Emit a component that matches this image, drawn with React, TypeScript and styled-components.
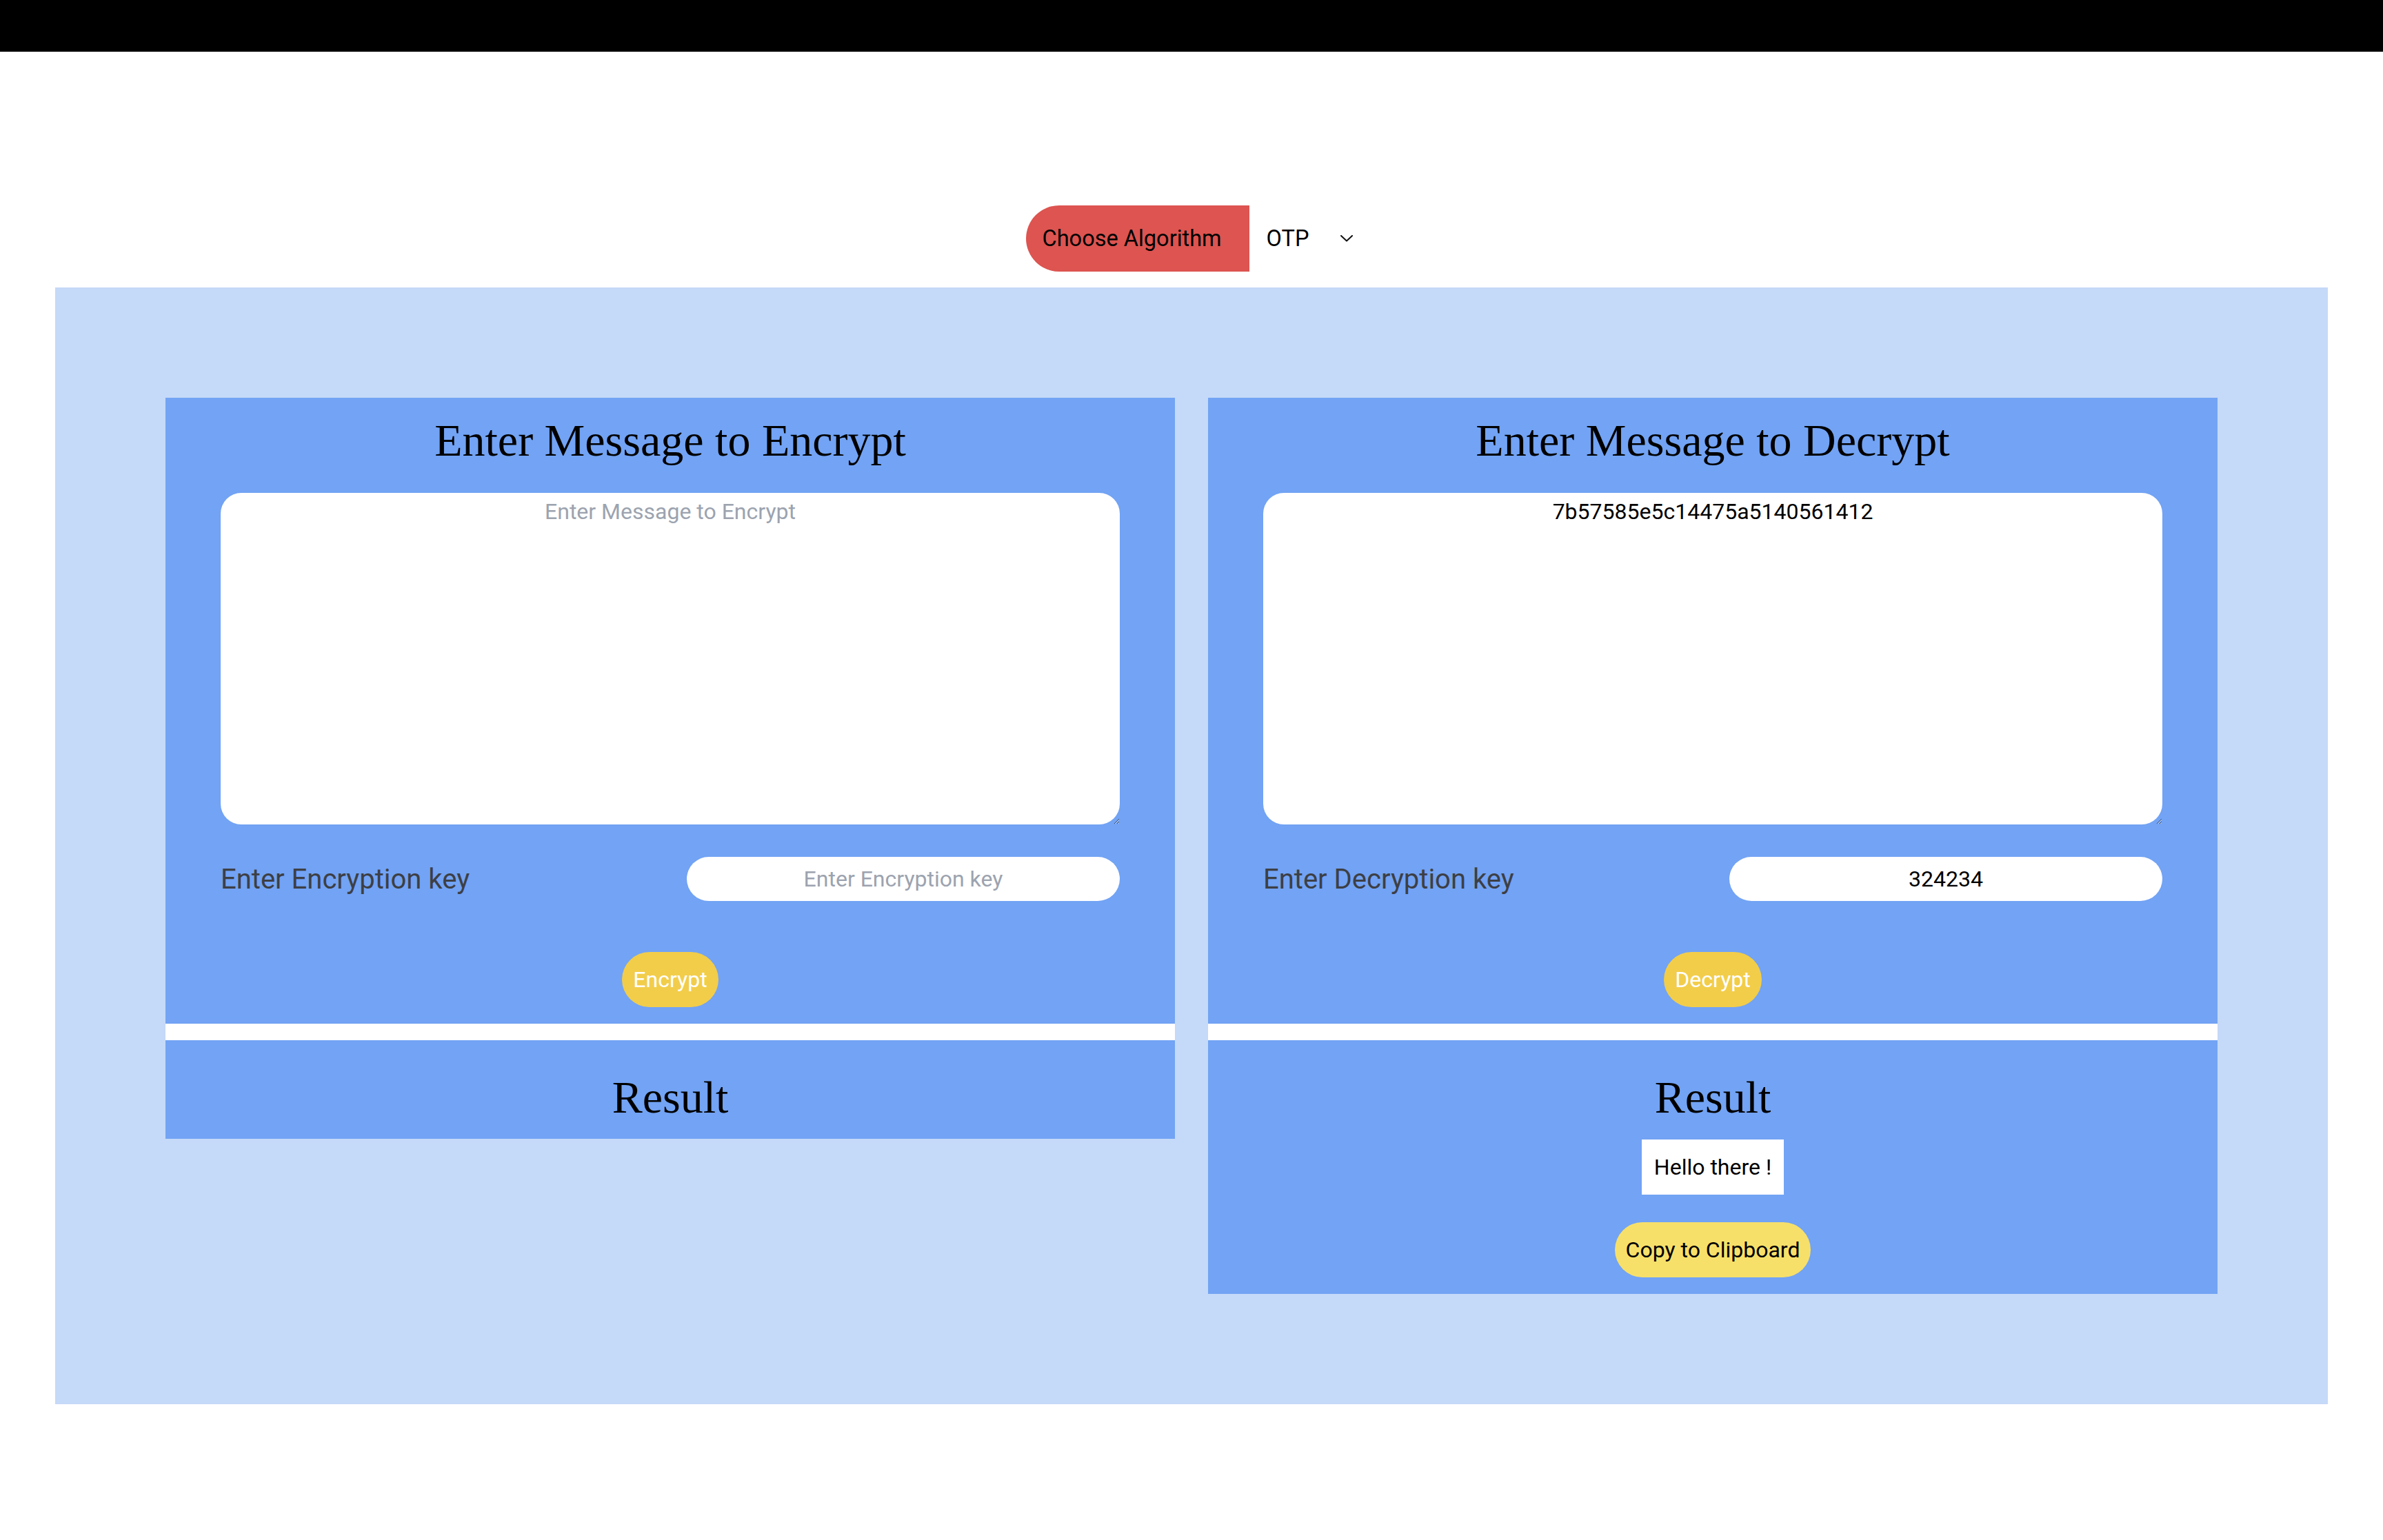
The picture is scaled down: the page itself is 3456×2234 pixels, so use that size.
import * as React from 'react';
import styled, { createGlobalStyle } from 'styled-components';

const GlobalStyle = createGlobalStyle`
  html, body {
    margin: 0;
    padding: 0;
    background: #ffffff;
    font-family: Roboto, "Liberation Sans", Arial, sans-serif;
  }
  * { box-sizing: border-box; }
`;

const TopBar = styled.div`
  height: 75px;
  background: #000000;
`;

const AlgoRow = styled.div`
  display: flex;
  justify-content: center;
  align-items: center;
  margin-top: 223px;
`;

const AlgoLabel = styled.div`
  height: 96px;
  display: flex;
  align-items: center;
  padding: 0 40px 0 24px;
  background: #dd5450;
  color: #000000;
  font-size: 32.5px;
  border-radius: 48px 0 0 48px;
`;

const SelectBox = styled.div`
  height: 96px;
  display: flex;
  align-items: center;
  padding: 0 6px 0 25px;
  font-size: 32.5px;
  color: #000000;
  gap: 46px;
`;

const Workspace = styled.div`
  margin: 23px 80px 0;
  padding: 160px;
  background: #c5d9f8;
  display: grid;
  grid-template-columns: 1fr 1fr;
  gap: 48px;
  align-items: start;
`;

const Column = styled.div`
  display: flex;
  flex-direction: column;
  gap: 24px;
  background: #ffffff;
`;

const Panel = styled.div`
  background: #72a3f4;
  padding: 26px 80px 24px;
  display: flex;
  flex-direction: column;
  align-items: center;
`;

const Heading = styled.h1`
  margin: 0;
  font-family: "Liberation Serif", "Times New Roman", serif;
  font-weight: 400;
  font-size: 66px;
  line-height: 72px;
  color: #000000;
  text-align: center;
`;

const MessageArea = styled.textarea`
  margin-top: 40px;
  width: 100%;
  height: 481px;
  border: none;
  outline: none;
  border-radius: 30px;
  padding: 8px 16px;
  background: #ffffff;
  font-family: Roboto, "Liberation Sans", Arial, sans-serif;
  font-size: 32px;
  color: #000000;
  text-align: center;
  resize: both;
  &::placeholder {
    color: #9ca3af;
  }
`;

const KeyRow = styled.div`
  margin-top: 47px;
  width: 100%;
  display: grid;
  grid-template-columns: 1fr 1fr;
  gap: 48px;
  align-items: center;
`;

const KeyLabel = styled.label`
  font-size: 40px;
  color: #3d3f45;
`;

const KeyInput = styled.input`
  height: 64px;
  width: 100%;
  border: none;
  outline: none;
  border-radius: 32px;
  background: #ffffff;
  font-family: Roboto, "Liberation Sans", Arial, sans-serif;
  font-size: 32px;
  color: #000000;
  text-align: center;
  &::placeholder {
    color: #9ca3af;
  }
`;

const PillButton = styled.button<{ $light?: boolean }>`
  height: 80px;
  padding: 0 16px;
  border: none;
  border-radius: 40px;
  background: ${(p) => (p.$light ? '#f7e06a' : '#f2cd4a')};
  color: ${(p) => (p.$light ? '#000000' : '#ffffff')};
  font-family: Roboto, "Liberation Sans", Arial, sans-serif;
  font-size: 32px;
  cursor: pointer;
`;

const ActionButton = styled(PillButton)`
  margin-top: 74px;
`;

const ResultPanel = styled.div`
  background: #72a3f4;
  padding: 47px 80px 24px;
  display: flex;
  flex-direction: column;
  align-items: center;
`;

const ResultText = styled.div`
  margin-top: 25px;
  height: 80px;
  padding: 0 18px;
  display: flex;
  align-items: center;
  background: #ffffff;
  font-size: 32px;
  color: #000000;
`;

const CopyButton = styled(PillButton)`
  margin-top: 40px;
`;

const Chevron = () => (
  <svg width="18" height="10" viewBox="0 0 18 10" fill="none">
    <polyline points="1,1 9,8.5 17,1" stroke="#111" strokeWidth="2" strokeLinecap="round" strokeLinejoin="round" />
  </svg>
);

type CipherProps = {
  title: string;
  placeholder: string;
  message: string;
  keyLabel: string;
  keyValue: string;
  action: string;
  result?: string;
};

function CipherColumn({ title, placeholder, message, keyLabel, keyValue, action, result }: CipherProps) {
  return (
    <Column>
      <Panel>
        <Heading>{title}</Heading>
        <MessageArea placeholder={placeholder} defaultValue={message} />
        <KeyRow>
          <KeyLabel>{keyLabel}</KeyLabel>
          <KeyInput placeholder={keyLabel} defaultValue={keyValue} />
        </KeyRow>
        <ActionButton>{action}</ActionButton>
      </Panel>
      <ResultPanel>
        <Heading>Result</Heading>
        {result && (
          <>
            <ResultText>{result}</ResultText>
            <CopyButton $light>Copy to Clipboard</CopyButton>
          </>
        )}
      </ResultPanel>
    </Column>
  );
}

export default function App() {
  return (
    <>
      <GlobalStyle />
      <TopBar />
      <AlgoRow>
        <AlgoLabel>Choose Algorithm</AlgoLabel>
        <SelectBox>
          <span>OTP</span>
          <Chevron />
        </SelectBox>
      </AlgoRow>
      <Workspace>
        <CipherColumn
          title="Enter Message to Encrypt"
          placeholder="Enter Message to Encrypt"
          message=""
          keyLabel="Enter Encryption key"
          keyValue=""
          action="Encrypt"
        />
        <CipherColumn
          title="Enter Message to Decrypt"
          placeholder="Enter Message to Decrypt"
          message="7b57585e5c14475a5140561412"
          keyLabel="Enter Decryption key"
          keyValue="324234"
          action="Decrypt"
          result="Hello there !"
        />
      </Workspace>
    </>
  );
}
